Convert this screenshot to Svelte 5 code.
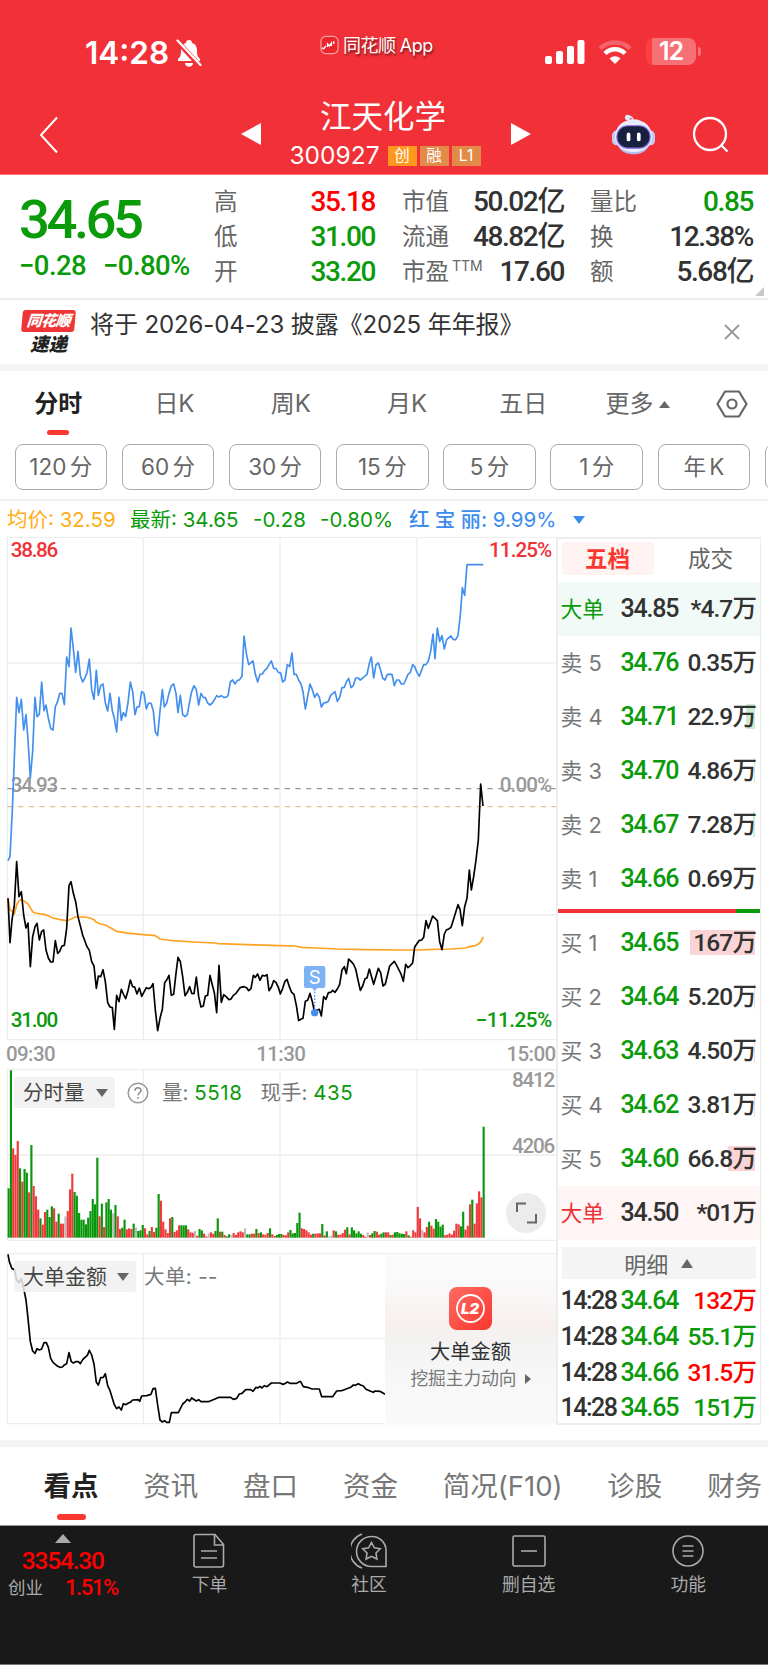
<script>
    const quotes = [
        [['高', '35.18', 'up'], ['低', '31.00', 'down'], ['开', '33.20', 'down']],
        [['市值', '50.02亿', ''], ['流通', '48.82亿', ''], ['市盈', '17.60', '', 'TTM']],
        [['量比', '0.85', 'down'], ['换', '12.38%', ''], ['额', '5.68亿', '']]
    ];

    const periods = ['分时', '日K', '周K', '月K', '五日'];
    const minutes = ['120 分', '60 分', '30 分', '15 分', '5 分', '1 分', '年 K', ''];

    // bar: width of the depth bar behind the amount
    const sells = [
        { name: '卖 5', price: '34.76', amount: '0.35万', bar: 0 },
        { name: '卖 4', price: '34.71', amount: '22.9万', bar: 9 },
        { name: '卖 3', price: '34.70', amount: '4.86万', bar: 1 },
        { name: '卖 2', price: '34.67', amount: '7.28万', bar: 2 },
        { name: '卖 1', price: '34.66', amount: '0.69万', bar: 0 }
    ];
    const buys = [
        { name: '买 1', price: '34.65', amount: '167万', bar: 65 },
        { name: '买 2', price: '34.64', amount: '5.20万', bar: 1 },
        { name: '买 3', price: '34.63', amount: '4.50万', bar: 1 },
        { name: '买 4', price: '34.62', amount: '3.81万', bar: 1 },
        { name: '买 5', price: '34.60', amount: '66.8万', bar: 27 }
    ];
    const trades = [
        ['14:28', '34.64', '132万', 'up'],
        ['14:28', '34.64', '55.1万', 'down'],
        ['14:28', '34.66', '31.5万', 'up'],
        ['14:28', '34.65', '151万', 'down']
    ];
    const sections = ['看点', '资讯', '盘口', '资金', '简况(F10)', '诊股', '财务'];

    // chart series, three units to a pixel
    const peer = '24,992 30,980 37,840 50,502 57,548 64,508 71,600 78,554 84,630 91,744 98,664 105,502 111,560 118,553 125,456 132,542 138,525 145,565 152,595 159,600 166,530 173,514 179,490 186,490 193,524 200,381 207,410 213,294 220,356 227,427 234,364 241,437 248,456 254,445 261,429 268,387 275,479 282,508 289,421 295,496 302,467 309,462 316,518 323,543 330,490 337,543 343,565 350,606 357,502 364,571 370,548 377,560 384,518 391,456 398,485 405,554 411,531 418,530 425,485 432,490 439,537 446,519 453,520 460,543 466,606 473,617 480,543 487,479 493,531 500,519 507,490 514,467 521,462 528,490 534,548 541,496 548,554 555,560 562,554 569,514 575,485 582,467 589,479 596,525 603,490 610,502 616,503 623,519 630,525 637,519 644,508 650,497 657,501 664,497 671,502 678,502 684,497 691,456 698,450 705,462 712,451 718,450 726,439 732,318 739,370 746,404 753,398 759,393 766,433 773,456 780,433 787,432 794,421 801,415 807,404 814,393 821,415 828,416 835,427 842,429 848,456 855,450 862,404 869,410 876,369 882,433 889,433 896,450 903,462 909,485 916,537 923,500 930,462 937,479 944,502 951,490 958,502 964,531 971,519 980,517 985,514 992,496 999,490 1005,485 1012,514 1019,502 1026,473 1033,472 1039,456 1046,445 1053,473 1060,467 1067,444 1074,444 1081,450 1087,445 1094,439 1101,433 1108,400 1114,381 1121,444 1128,404 1135,399 1142,421 1148,444 1155,450 1162,433 1176,433 1183,467 1190,450 1197,450 1204,462 1211,462 1217,450 1224,433 1231,427 1238,404 1244,410 1251,427 1258,439 1265,420 1271,404 1278,404 1285,393 1292,364 1299,312 1305,386 1312,294 1319,335 1326,317 1333,357 1340,329 1347,323 1353,318 1360,329 1367,329 1374,317 1381,255 1387,173 1394,196 1401,104 1450,104';
    const average = '24,1105 30,1140 37,1143 43,1152 50,1125 57,1112 64,1109 71,1112 84,1122 98,1145 105,1149 132,1153 145,1157 159,1164 180,1169 200,1172 212,1168 225,1161 255,1161 270,1164 282,1169 289,1177 302,1182 316,1185 350,1204 390,1210 430,1214 466,1217 480,1227 500,1230 520,1232 580,1236 645,1239 655,1241 740,1244 840,1247 885,1248 905,1252 950,1254 1010,1257 1100,1259 1200,1260 1252,1260 1300,1258 1350,1257 1395,1254 1410,1250 1425,1247 1435,1242 1442,1236 1450,1221';
    const price = '24,1105 30,1238 36,1170 43,1125 50,995 57,1100 64,1085 71,1155 78,1194 84,1179 91,1310 98,1220 105,1190 111,1180 118,1230 125,1204 131,1200 138,1260 145,1284 152,1296 159,1296 166,1232 173,1270 179,1264 186,1248 193,1246 200,1195 207,1067 213,1055 220,1090 227,1115 234,1160 248,1215 261,1250 268,1261 275,1295 282,1308 289,1375 295,1338 302,1340 309,1319 316,1355 323,1418 330,1431 337,1433 343,1498 350,1396 357,1415 364,1378 370,1392 377,1406 384,1382 391,1350 398,1370 404,1371 411,1392 418,1374 425,1399 439,1373 446,1376 453,1372 459,1361 466,1440 473,1502 480,1465 487,1438 494,1358 500,1350 507,1336 514,1396 521,1393 528,1330 534,1282 541,1295 548,1340 555,1397 562,1387 569,1370 575,1390 582,1391 589,1341 596,1400 603,1431 610,1428 616,1398 623,1396 630,1336 637,1365 643,1388 650,1448 657,1306 664,1417 671,1394 678,1400 687,1409 693,1407 700,1396 707,1391 720,1373 732,1370 740,1373 746,1382 753,1376 760,1336 766,1342 773,1332 780,1351 787,1336 794,1338 801,1334 807,1382 814,1372 821,1352 828,1357 835,1372 841,1392 848,1375 855,1354 861,1348 868,1370 875,1387 882,1393 889,1426 896,1472 902,1468 909,1465 916,1414 923,1411 930,1390 937,1415 944,1448 951,1440 958,1438 964,1458 971,1400 978,1408 985,1388 992,1387 998,1381 1005,1387 1012,1377 1019,1363 1026,1320 1033,1310 1039,1331 1046,1287 1053,1294 1060,1302 1067,1317 1074,1350 1081,1381 1088,1368 1095,1346 1101,1344 1108,1317 1121,1363 1135,1315 1142,1328 1149,1368 1156,1362 1169,1308 1183,1294 1190,1306 1203,1332 1210,1354 1217,1303 1224,1313 1231,1307 1238,1299 1244,1251 1257,1232 1265,1230 1271,1222 1278,1172 1285,1195 1298,1158 1312,1172 1319,1235 1326,1259 1333,1212 1339,1200 1346,1197 1353,1192 1360,1170 1374,1124 1380,1138 1387,1187 1394,1130 1401,1105 1408,1020 1414,1080 1421,1040 1428,990 1435,930 1442,762 1449,828';
    const bigOrders = '24,583 28,605 36,626 43,628 50,660 57,668 64,656 71,685 78,720 84,775 91,845 98,873 105,880 111,866 118,870 125,867 132,848 139,848 145,862 152,895 159,907 173,919 180,922 187,921 194,914 200,911 207,878 214,905 220,909 227,905 235,905 241,911 248,899 255,892 262,886 268,871 275,885 282,912 289,967 295,975 302,953 310,952 316,941 323,977 330,992 337,1015 343,1034 350,1046 357,1041 364,1050 370,1031 377,1034 384,1030 391,1027 398,1020 415,1019 419,1024 425,1008 440,1007 453,1003 459,986 466,985 473,1035 480,1080 487,1086 494,1082 500,1087 508,1087 514,1058 535,1058 548,1032 555,1026 562,1018 569,1023 575,1014 589,1023 596,1019 603,1025 625,1025 645,1017 657,1012 692,1012 700,1018 710,1015 718,1002 726,1000 737,989 752,989 759,994 768,982 773,984 780,979 786,984 793,977 801,980 814,969 840,969 848,973 855,971 862,966 870,970 890,970 898,965 902,965 910,980 922,982 936,987 958,987 965,1010 998,1010 1010,993 1025,992 1052,982 1060,975 1066,976 1075,971 1082,975 1090,978 1098,988 1110,993 1120,997 1125,993 1140,994 1155,1003';

    // one entry per minute: colour letter and height
    const volumes = 'g148 g502 r268 r248 r290 g208 r168 g206 g195 r136 g278 r155 r124 r84 g58 r39 r77 g84 g62 g94 r88 r48 g72 r42 r42 n64 r80 r145 r192 g137 g126 g74 g54 g54 g40 g60 g80 g116 g100 g240 r64 g102 r32 g106 g116 g84 n73 g98 r64 r26 g30 g54 r25 r28 r26 g42 n30 g20 g22 g38 r28 r10 g20 r32 r17 g30 g131 r111 r48 r25 r14 r58 g62 r17 r22 r37 g37 g37 g37 r25 r16 r15 n20 r6 g26 g22 r12 r4 n12 r16 r12 g20 g58 r18 g18 r8 g4 g10 n8 r14 r8 r16 r19 r16 n28 g10 g10 r12 r12 g26 r14 g16 r10 r9 r14 g28 r10 r5 g8 g11 g11 r8 r7 r16 g23 g13 g14 g44 g75 r28 r26 r22 r16 r9 g12 r12 r13 r13 g41 r7 g19 n4 n7 r22 g19 r9 r9 r14 r24 g31 r10 g31 g22 g13 g19 g12 r8 r3 n15 r8 g13 g20 r18 r9 g12 g16 r16 r16 g8 r9 g16 g17 g13 g12 g11 r19 g7 r3 r22 r16 r92 r58 n23 r16 r32 g48 r36 r27 g56 g48 g33 g39 r7 r9 r13 r9 r21 r42 r40 g34 g78 r24 r36 r100 g114 r42 r103 r139 r121 g333'
        .split(' ')
        .map((v) => ({ color: { g: '#0a960a', r: '#ef3a3d', n: '#bbb' }[v[0]], h: +v.slice(1) }));
</script>

{#snippet order(row, side)}
    <div class="row">
        <span class="name">{row.name}</span>
        <span class="price down">{row.price}</span>
        <span class="amount">
            {#if row.bar}<i class="depth {side}" style="width: {row.bar}px"></i>{/if}
            <b>{row.amount}</b>
        </span>
    </div>
{/snippet}

<div class="phone">
    <header>
        <div class="status">
            <span class="clock">14:28</span>
            <svg class="bell" viewBox="0 0 26 28" width="26" height="28">
                <path d="M13 1c2 0 3 1 3 3 4 1 5 4 5 8 0 5 1 6 3 8v2H2v-2c2-2 3-3 3-8 0-4 1-7 5-8 0-2 1-3 3-3zM9 24h8c0 5-8 5-8 0z" fill="#fff" />
                <path d="M0 1l24 26" stroke="#f13038" stroke-width="5" />
                <path d="M1.500 1.500l23 24.500" stroke="#fff" stroke-width="2.200" stroke-linecap="round" />
            </svg>
            <span class="app">
                <svg viewBox="0 0 20 20" width="19" height="20">
                    <rect x="1" y="1" width="18" height="18" rx="5" fill="#e9262e" stroke="#ff9da0" stroke-width="1.300" />
                    <path d="M2 13l2 1 2-3M8 12V9l2 2 2-3v3M14.500 6v3" fill="none" stroke="#fff" stroke-width="1.500" />
                </svg>
                同花顺 App
            </span>
            <svg class="signal" viewBox="0 0 40 25" width="40" height="25" fill="#fff">
                <rect x="0" y="16" width="7" height="8" rx="2" />
                <rect x="11" y="11" width="7" height="13" rx="2" />
                <rect x="22" y="6" width="7" height="18" rx="2" />
                <rect x="32.500" y="0" width="7" height="24" rx="2" />
            </svg>
            <svg class="wifi" viewBox="0 0 34 26" width="34" height="26" fill="none" stroke="#fff">
                <path d="M2 9.500a21.500 21.500 0 0 1 30 0" stroke-width="4.500" opacity=".25" />
                <path d="M7 14.500a14 14 0 0 1 20 0" stroke-width="4.500" />
                <path d="M17 25l-5.500-5.500a8 8 0 0 1 11 0z" fill="#fff" stroke="none" />
            </svg>
            <span class="battery">12</span>
        </div>
        <nav>
            <svg class="back" viewBox="0 0 20 38" width="20" height="38"><path d="M18 1.500L2 19l16 17.500" fill="none" stroke="#fff" stroke-width="2" /></svg>
            <svg class="prev" viewBox="0 0 20 22" width="20" height="22"><path d="M20 0v22L0 11z" fill="#fff" /></svg>
            <div class="stock">
                <h1>江天化学</h1>
                <div class="code">300927 <em class="hot">创</em><em>融</em><em>L1</em></div>
            </div>
            <svg class="next" viewBox="0 0 20 22" width="20" height="22"><path d="M0 0v22l20-11z" fill="#fff" /></svg>
            <svg class="robot" viewBox="0 0 44 42" width="43" height="41">
                <path d="M21 8c1-4-1-6-6-6" fill="none" stroke="#e8ecff" stroke-width="1.600" />
                <circle cx="16" cy="3.500" r="2.800" fill="#dfe8fb" />
                <rect x="0" y="17" width="9" height="15" rx="4.500" fill="#c3cdf3" />
                <rect x="35" y="17" width="9" height="15" rx="4.500" fill="#c3cdf3" />
                <ellipse cx="22" cy="23" rx="19" ry="17.500" fill="#e8edff" />
                <path d="M7 33c6 8 24 8 30 0-3 11-27 11-30 0z" fill="#b6bdef" />
                <rect x="5" y="12" width="34" height="23" rx="11" fill="#17213f" stroke="#8670de" stroke-width="1.200" />
                <rect x="15" y="19" width="3.800" height="9" rx="1.900" fill="#fff" />
                <rect x="25.500" y="19" width="3.800" height="9" rx="1.900" fill="#fff" />
            </svg>
            <svg class="search" viewBox="0 0 37 37" width="37" height="37" fill="none" stroke="#fff" stroke-width="2.300"><circle cx="18" cy="18" r="16" /><path d="M29 29l6.500 6.500" /></svg>
        </nav>
    </header>

    <section class="quote">
        <div class="last down">
            <strong>34.65</strong>
            <div class="delta"><span>−0.28</span><span>−0.80%</span></div>
        </div>
        {#each quotes as column}
            <dl>
                {#each column as [label, value, tone, sup]}
                    <div><dt>{label}{#if sup}<sup>{sup}</sup>{/if}</dt><dd class={tone}>{value}</dd></div>
                {/each}
            </dl>
        {/each}
        <svg class="corner" viewBox="0 0 9 9" width="9" height="9"><path d="M9 0v9H0z" fill="#c8c8c8" /></svg>
    </section>

    <section class="news">
        <div class="badge"><b>同花顺</b><i>速递</i></div>
        <p>将于 2026-04-23 披露《2025 年年报》</p>
        <svg viewBox="0 0 16 16" width="16" height="16"><path d="M1 1l14 14M15 1L1 15" stroke="#999" stroke-width="1.800" /></svg>
    </section>

    <div class="periods">
        {#each periods as p, i}
            <span class:active={i === 0}>{p}</span>
        {/each}
        <span class="more">更多<svg viewBox="0 0 11 7" width="11" height="7"><path d="M5.500 0L11 7H0z" fill="#666" /></svg></span>
        <svg class="gear" viewBox="0 0 32 28" width="32" height="28" fill="none" stroke="#666" stroke-width="2.200"><path d="M9 1.500h14L30.500 14 23 26.500H9L1.500 14z" stroke-linejoin="round" /><circle cx="16" cy="14" r="4.500" /></svg>
    </div>

    <div class="minutes">
        {#each minutes as m}
            <span>{m}</span>
        {/each}
    </div>

    <div class="info">
        <span class="avg">均价: 32.59</span>
        <span class="down latest">最新: 34.65</span>
        <span class="down diff">-0.28</span>
        <span class="down pct">-0.80%</span>
        <span class="peer"><b>红 宝 丽:</b> 9.99%</span>
        <svg viewBox="0 0 12 8" width="12" height="8"><path d="M0 0h12L6 8z" fill="#3c8cf0" /></svg>
    </div>

    <main>
        <div class="charts">
            <svg viewBox="0 0 1671 1512" width="557" height="504">
                <g stroke="#ededed" stroke-width="4" fill="none">
                    <path d="M22 1h1645M22 378h1645M22 1134h1645M22 1508h1645M22 0v1508M430 0v1508M840 0v1508M1251 0v1508" />
                </g>
                <g class="axis">
                    <text x="32" y="60" class="t-red" textLength="143">38.86</text>
                    <text x="32" y="765" textLength="143">34.93</text>
                    <text x="32" y="1471" class="t-green" textLength="143">31.00</text>
                    <text x="1657" y="60" text-anchor="end" class="t-red" textLength="190">11.25%</text>
                    <text x="1657" y="765" text-anchor="end" textLength="158">0.00%</text>
                    <text x="1657" y="1471" text-anchor="end" class="t-green" textLength="230">−11.25%</text>
                </g>
                <g transform="translate(0 -21)" fill="none" stroke-width="5" stroke-linejoin="round">
                    <path d="M22 776h1645" stroke="#999" stroke-width="4" stroke-dasharray="16" />
                    <path d="M22 830h1645" stroke="#e2c091" stroke-width="4" stroke-dasharray="16" />
                    <polyline points={peer} stroke="#428fee" />
                    <polyline points={average} stroke="#ffa21f" />
                    <polyline points={price} stroke="#000" />
                    <path d="M944 1375v72" stroke="#428fee" stroke-width="4" stroke-dasharray="5" />
                    <circle cx="944" cy="1448" r="11" fill="#428fee" />
                    <path d="M918 1308h52q6 0 6 6v54q0 6-6 6h-18l-8 10-8-10h-18q-6 0-6-6v-54q0-6 6-6z" fill="#7db3f5" />
                    <text class="mark" x="944" y="1363" text-anchor="middle" fill="#fff">S</text>
                </g>
            </svg>
            <div class="times"><span>09:30</span><span>11:30</span><span>15:00</span></div>
            <div class="pane volume">
                <svg viewBox="0 0 1671 519" width="557" height="173">
                    <path d="M22 2h1645M22 258h1645M22 514h1645M22 0v514M430 0v514M840 0v514M1251 0v514" stroke="#ededed" stroke-width="4" fill="none" />
                    {#each volumes as v, i}
                        <rect x={22.8 + i * 6.818} y={506 - v.h} width="6.400" height={v.h} fill={v.color} />
                    {/each}
                    <text x="1666" y="53" text-anchor="end" textLength="130">8412</text>
                    <text x="1666" y="252" text-anchor="end" textLength="130">4206</text>
                </svg>
                <div class="legend">
                    <span class="pill">分时量<svg viewBox="0 0 12 8" width="12" height="8"><path d="M0 0h12L6 8z" fill="#666" /></svg></span>
                    <svg class="help" viewBox="0 0 22 22" width="22" height="22"><circle cx="11" cy="11" r="9.800" fill="none" stroke="#999" stroke-width="1.500" /><path d="M8 8.800c0-4 6-4 6-.3 0 2.300-3 2.200-3 4.800M11 15v1.800" fill="none" stroke="#888" stroke-width="1.500" /></svg>
                    <span>量: <em>5518</em></span>
                    <span class="hands">现手: <em>435</em></span>
                </div>
                <svg class="expand" viewBox="0 0 40 40" width="40" height="40"><circle cx="20" cy="20" r="20" fill="#ececec" /><path d="M11 19v-8.500h9M21 29.500h9V21" fill="none" stroke="#666" stroke-width="2" /></svg>
            </div>
            <div class="pane orders">
                <svg viewBox="0 0 1671 519" width="557" height="173">
                    <path d="M22 2h1645M22 257h1645M22 512h1645M22 0v512M430 0v512M840 0v512M1251 0v512" stroke="#ededed" stroke-width="4" fill="none" />
                    <polyline transform="translate(0 -579)" points={bigOrders} fill="none" stroke="#000" stroke-width="5" stroke-linejoin="round" />
                </svg>
                <div class="legend">
                    <span class="pill wide">大单金额<svg viewBox="0 0 12 8" width="12" height="8"><path d="M0 0h12L6 8z" fill="#666" /></svg></span>
                    <span class="big">大单: --</span>
                </div>
                <div class="promo">
                    <svg viewBox="0 0 44 44" width="44" height="44">
                        <defs><linearGradient id="l2" x2="1" y2="1"><stop stop-color="#ff6b63" /><stop offset="1" stop-color="#fa372f" /></linearGradient></defs>
                        <rect width="43" height="43" rx="8" fill="url(#l2)" />
                        <circle cx="21.500" cy="21.500" r="13.500" fill="none" stroke="#fff" stroke-width="1.800" />
                        <text x="21" y="27" text-anchor="middle" class="l2">L2</text>
                    </svg>
                    <strong>大单金额</strong>
                    <span>挖掘主力动向<svg viewBox="0 0 6 10" width="6" height="10"><path d="M0 0l6 5-6 5z" fill="#666" /></svg></span>
                </div>
            </div>
        </div>

        <aside>
            <div class="switch"><b>五档</b><span>成交</span></div>
            <div class="row large sell">
                <span class="name">大单</span><span class="price">34.85</span><span class="amount"><b>*4.7万</b></span>
            </div>
            {#each sells as row}{@render order(row, 'green')}{/each}
            <div class="ratio"><i></i></div>
            {#each buys as row}{@render order(row, 'red')}{/each}
            <div class="row large buy">
                <span class="name">大单</span><span class="price">34.50</span><span class="amount"><b>*01万</b></span>
            </div>
            <div class="detail">明细<svg viewBox="0 0 12 9" width="12" height="9"><path d="M6 0l6 9H0z" fill="#666" /></svg></div>
            {#each trades as [time, value, amount, tone]}
                <div class="trade"><span>{time}</span><span class="price down">{value}</span><span class="amount {tone}">{amount}</span></div>
            {/each}
        </aside>
    </main>

    <div class="sections">
        {#each sections as s, i}
            <span class:active={i === 0}>{s}</span>
        {/each}
    </div>

    <footer>
        <div class="index">
            <svg viewBox="0 0 16 9" width="16" height="9"><path d="M8 0l8 9H0z" fill="#aaa" /></svg>
            <strong>3354.30</strong>
            <div><span>创业</span><b>1.51%</b></div>
        </div>
        <div class="item">
            <svg viewBox="0 0 34 36" width="34" height="36"><path d="M4 1.500h19l8.500 10v20.500q0 2-2 2H4q-2 0-2-2V3.500q0-2 2-2zM22.500 2v10h9M9 18h16M9 25h16" /></svg>
            下单
        </div>
        <div class="item">
            <svg viewBox="0 0 36 36" width="36" height="36"><path d="M20.500 3.500A14 14 0 0 1 35 18v15.500H20.500a15 15 0 0 1 0-30zM11 1a18 18 0 0 0 0 34M20.500 9.500l2.800 5.300 5.900 1-4.200 4.200.9 6-5.400-2.700-5.400 2.700.9-6-4.200-4.200 5.900-1z" /></svg>
            社区
        </div>
        <div class="item">
            <svg viewBox="0 0 36 36" width="36" height="36"><rect x="2" y="3" width="32" height="30" rx="1.500" /><path d="M10 18h16" /></svg>
            删自选
        </div>
        <div class="item">
            <svg viewBox="0 0 36 36" width="36" height="36"><circle cx="18" cy="18" r="15" /><path d="M12.500 13h11M12.500 18h11M12.500 23h11" /></svg>
            功能
        </div>
    </footer>
</div>

<style>
    :global(body) {
        background: #fff;
    }

    .phone {
        width: 768px;
        height: 1665px;
        overflow: hidden;
        display: flex;
        flex-direction: column;
        font-family: Inter, 'Noto Sans CJK SC', sans-serif;
        color: #323232;
        background: #fff;
    }

    .phone * {
        box-sizing: border-box;
    }

    svg {
        display: block;
        flex: none;
    }

    em, i {
        font-style: normal;
    }

    .up { color: #ff0000; }
    .down { color: #0a9a0a; }

    header {
        height: 175px;
        flex: none;
        background: #f13038;
        border-bottom: 1px solid #f77;
        color: #fff;
    }

    .status {
        height: 90px;
        padding-left: 85px;
        display: flex;
        align-items: flex-start;
    }

    .clock {
        width: 91px;
        padding-top: 34px;
        font-size: 31.500px;
        line-height: 38px;
        font-weight: 600;
        white-space: nowrap;
    }

    .bell { margin-top: 39px; }

    .app {
        display: flex;
        gap: 4px;
        width: 225px;
        margin: 35px 0 0 118px;
        font-size: 18px;
        line-height: 22px;
        letter-spacing: -.55px;
        text-shadow: 1px 2px 2px rgba(0, 0, 0, .5);
    }

    .signal { margin-top: 40px; }
    .wifi { margin: 39px 0 0 13px; }

    .battery {
        position: relative;
        width: 50px;
        height: 27px;
        margin: 38px 0 0 14px;
        border-radius: 8px;
        background: linear-gradient(90deg, #ff3f40 6px, #f67176 6px);
        font-size: 25px;
        font-weight: 600;
        line-height: 27px;
        text-align: center;
        letter-spacing: -1px;
    }

    .battery::after {
        content: '';
        position: absolute;
        right: -5px;
        top: 9px;
        width: 3px;
        height: 9px;
        border-radius: 0 3px 3px 0;
        background: #f67176;
    }

    nav {
        display: flex;
        align-items: flex-start;
        padding-left: 39px;
    }

    .back { margin-top: 26px; }
    .prev { margin: 33px 0 0 182px; }

    .stock {
        width: 250px;
        text-align: center;
        padding-top: 8px;
    }

    h1 {
        margin: 0;
        padding-right: 6px;
        font-size: 31.500px;
        font-weight: 400;
        line-height: 38px;
    }

    .code {
        display: flex;
        align-items: center;
        justify-content: center;
        gap: 3px;
        margin: 7px 2px 0 0;
        font-size: 24.500px;
        line-height: 25px;
    }

    .code em {
        width: 29px;
        height: 20px;
        font-size: 15.500px;
        line-height: 20px;
        background: #e28b48;
    }

    .code .hot {
        background: #ff981c;
        margin-left: 5px;
    }

    .next { margin-top: 33px; }
    .robot { margin: 24px 0 0 81px; }
    .search { margin: 26px 0 0 37px; }

    .quote {
        position: relative;
        flex: none;
        height: 125px;
        border-bottom: 2px solid #ececec;
        display: grid;
        grid-template-columns: 194px 163px 163px 163px;
        column-gap: 0;
        padding: 9px 0 0 19px;
    }

    .quote dl { padding-left: 1px; }
    .quote dl:nth-of-type(2) { padding-left: 26px; width: 189px; }
    .quote dl:nth-of-type(3) { padding-left: 51px; width: 215px; }

    .last {
        font-family: Roboto, 'Noto Sans CJK SC', sans-serif;
        font-weight: 500;
    }

    .last strong {
        display: block;
        font-size: 54.500px;
        font-weight: 500;
        line-height: 64px;
        letter-spacing: -3.500px;
        margin-top: 3px;
    }

    .delta {
        display: flex;
        gap: 17px;
        font-size: 27.500px;
        line-height: 30px;
        letter-spacing: -.6px;
    }

    dl {
        margin: 0;
    }

    dl div {
        display: flex;
        justify-content: space-between;
        height: 35px;
        line-height: 35px;
        white-space: nowrap;
    }

    dt {
        font-size: 23.500px;
        color: #666;
    }

    dt sup {
        font-size: 14px;
        line-height: 10px;
        margin-left: 3px;
    }

    dd {
        margin: 0 1px 0 0;
        font: 500 28px/35px Roboto, 'Noto Sans CJK SC', sans-serif;
        letter-spacing: -1.400px;
    }

    .corner {
        position: absolute;
        right: 4px;
        bottom: 2px;
    }

    .news {
        flex: none;
        height: 71px;
        display: flex;
        align-items: flex-start;
        padding: 10px 28px 0 22px;
        border-bottom: 7px solid #f4f4f4;
    }

    .badge {
        width: 53px;
        margin-right: 15px;
        text-align: center;
        font-style: italic;
    }

    .badge b {
        display: block;
        height: 22px;
        color: #fff;
        background: #ee3434;
        border-radius: 3px;
        transform: skewX(-5deg);
        font-size: 15px;
        font-weight: 900;
        line-height: 22px;
        letter-spacing: -.5px;
    }

    .badge i {
        display: block;
        font-size: 18.500px;
        font-weight: 900;
        font-style: italic;
        line-height: 25px;
        color: #222;
    }

    .news p {
        flex: 1;
        margin: 0;
        font-size: 24px;
        line-height: 30px;
        letter-spacing: -.1px;
    }

    .news svg { margin-top: 14px; }

    .periods {
        flex: none;
        height: 72px;
        display: flex;
        align-items: flex-start;
        padding: 15px 20px 0 0;
        font-size: 24px;
        line-height: 36px;
        color: #666;
    }

    .periods span {
        width: 116.300px;
        text-align: center;
    }

    .periods .active, .sections .active {
        position: relative;
        color: #222;
        font-weight: 700;
    }

    .active::after {
        content: '';
        position: absolute;
        left: 50%;
        bottom: -13px;
        width: 22px;
        height: 5px;
        margin-left: -11px;
        border-radius: 3px;
        background: #fb382f;
    }

    .periods .more {
        display: flex;
        align-items: center;
        gap: 6px;
        width: 110px;
        margin-left: 24px;
    }

    .gear { margin: 4px 0 0 auto; }

    .minutes {
        flex: none;
        height: 58px;
        display: flex;
        gap: 14.700px;
        padding: 1px 0 0 14.500px;
        overflow: hidden;
        border-bottom: 2px solid #efefef;
    }

    .minutes span {
        flex: none;
        width: 92.500px;
        height: 46px;
        border: 1.500px solid #aaa;
        border-radius: 8px;
        font-size: 22.500px;
        line-height: 44px;
        word-spacing: -3px;
        text-align: center;
        color: #666;
    }

    .info {
        flex: none;
        height: 36px;
        display: flex;
        padding-left: 7px;
        font-size: 20.500px;
        line-height: 37px;
        white-space: nowrap;
    }

    .avg { width: 123px; color: #ffae17; }
    .latest { width: 123px; }
    .diff { width: 67px; }
    .pct { width: 89px; }
    .info .peer { width: 164px; color: #3c8cf0; }
    .peer b { font-weight: 500; letter-spacing: -.1px; }
    .info svg { margin-top: 15px; }

    main {
        flex: none;
        display: flex;
        height: 903px;
    }

    .charts {
        width: 555.500px;
    }

    svg text {
        font-family: Roboto, sans-serif;
        font-size: 62px;
        font-weight: 500;
        fill: #999;
    }

    svg .t-red { fill: #ee3237; }
    svg .t-green { fill: #0a9a0a; }
    svg .mark { font: 400 56px Inter, sans-serif; fill: #fff; }
    svg .l2 { font: italic 900 15px Inter, sans-serif; fill: #fff; }

    .times {
        display: flex;
        justify-content: space-between;
        height: 28px;
        padding: 0 0 0 6px;
        font: 500 20.500px/26px Roboto, sans-serif;
        letter-spacing: -.6px;
        color: #999;
    }

    .pane {
        position: relative;
        height: 184px;
    }

    .legend {
        position: absolute;
        left: 14px;
        top: 8px;
        display: flex;
        align-items: center;
        font-size: 20.500px;
        line-height: 31px;
        white-space: nowrap;
        color: #777;
    }

    .pill {
        display: flex;
        align-items: center;
        justify-content: space-between;
        width: 101px;
        height: 31px;
        padding: 0 7px 0 9px;
        border-radius: 3px;
        color: #444;
        background: rgba(240, 240, 240, .85);
    }

    .wide {
        width: 122px;
        font-size: 21px;
    }

    .help { margin: 0 13px 0 12px; }
    .legend em { color: #0a9a0a; letter-spacing: .6px; }
    .hands { margin-left: 18px; }
    .big { margin-left: 8px; letter-spacing: .4px; }

    .expand {
        position: absolute;
        right: 9.500px;
        bottom: 20px;
    }

    .promo {
        position: absolute;
        left: 385px;
        top: 1px;
        width: 171px;
        height: 170px;
        display: flex;
        flex-direction: column;
        align-items: center;
        padding-top: 33px;
        color: #323232;
        background: linear-gradient(180deg, #fafafa 15%, #f7efee 42%, #f2f4f3 55%, #f9f9f9 85%);
    }

    .promo strong {
        margin-top: 7px;
        font-size: 20.200px;
        font-weight: 400;
        line-height: 27px;
    }

    .promo span {
        display: flex;
        align-items: center;
        gap: 8px;
        font-size: 17.700px;
        line-height: 27px;
        color: #777;
    }

    aside {
        width: 205.500px;
        height: 888px;
        border: 2px solid #ededed;
        border-width: 2px 1px 2px 2px;
    }

    .switch {
        display: flex;
        height: 43px;
        padding: 3px 0 0 4px;
        font-size: 22.500px;
        line-height: 33px;
        text-align: center;
        color: #666;
    }

    .switch b {
        width: 92px;
        height: 33px;
        margin-right: 11px;
        border-radius: 4px;
        color: #fb382f;
        background: #fff3f2;
    }

    .switch span { width: 92px; }

    .row, .trade {
        display: grid;
        grid-template-columns: 60px 62px 1fr;
        height: 54px;
        padding: 0 4px 0 3px;
        line-height: 54px;
        white-space: nowrap;
    }

    .name {
        font-size: 21.800px;
        color: #777;
    }

    .price, .amount, .trade {
        font-family: Roboto, 'Noto Sans CJK SC', sans-serif;
        font-size: 25px;
        font-weight: 500;
        letter-spacing: -1.200px;
    }

    .amount {
        position: relative;
        justify-self: end;
        font-size: 24.500px;
        letter-spacing: -.9px;
    }

    .amount b {
        position: relative;
        font-weight: 500;
    }

    .depth {
        position: absolute;
        right: 1px;
        top: 14px;
        height: 25px;
        background: #fbd4d5;
    }

    .depth.green { background: #cdebcf; }
    .sell { background: #f1faf6; }
    .sell .name { color: #0a9a0a; }
    .buy { background: #fff5f5; }
    .buy .name { color: #ee3237; }

    .ratio {
        height: 4px;
        margin: 3px 0 3px;
        background: #0a9a0a;
    }

    .ratio i {
        display: block;
        width: 178px;
        height: 4px;
        background: #ee3237;
    }

    .detail {
        display: flex;
        align-items: center;
        justify-content: center;
        gap: 13px;
        height: 32px;
        margin: 7px 4px 4px 4px;
        font-size: 22px;
        color: #666;
        background: #f4f4f4;
    }

    .trade {
        height: 35.800px;
        line-height: 35.800px;
    }

    .trade span:first-child { letter-spacing: -1.500px; }

    .sections {
        flex: none;
        height: 85px;
        display: flex;
        align-items: flex-start;
        gap: 44.800px;
        padding: 17px 0 0 43.500px;
        overflow: hidden;
        border-top: 7px solid #f4f4f4;
        font-size: 27.500px;
        line-height: 44px;
        color: #777;
        white-space: nowrap;
    }

    .sections span { flex: none; }

    .sections .active::after {
        bottom: -12px;
        width: 29px;
        height: 6px;
        margin-left: -14px;
    }

    footer {
        flex: 1;
        display: flex;
        border-top: 1px solid #999;
        border-bottom: 1px solid #777;
        background: #191919;
        color: #aaa;
    }

    .index {
        width: 130px;
        padding: 8px 4px 0 0;
        display: flex;
        flex-direction: column;
        align-items: center;
        font-family: Roboto, 'Noto Sans CJK SC', sans-serif;
    }

    .index strong {
        margin-top: 4px;
        font-size: 24.500px;
        font-weight: 500;
        line-height: 28px;
        letter-spacing: -1.200px;
        color: #ff0000;
    }

    .index div {
        display: flex;
        gap: 22px;
        font-size: 17.500px;
        line-height: 26px;
    }

    .index b {
        color: #ff0000;
        font-size: 22px;
        font-weight: 500;
        letter-spacing: -1.400px;
    }

    .item {
        width: 160px;
        display: flex;
        flex-direction: column;
        align-items: center;
        padding-top: 7px;
        font-size: 17.800px;
        line-height: 31px;
    }

    .item svg {
        fill: none;
        stroke: #aaa;
        stroke-width: 1.600;
    }
</style>
